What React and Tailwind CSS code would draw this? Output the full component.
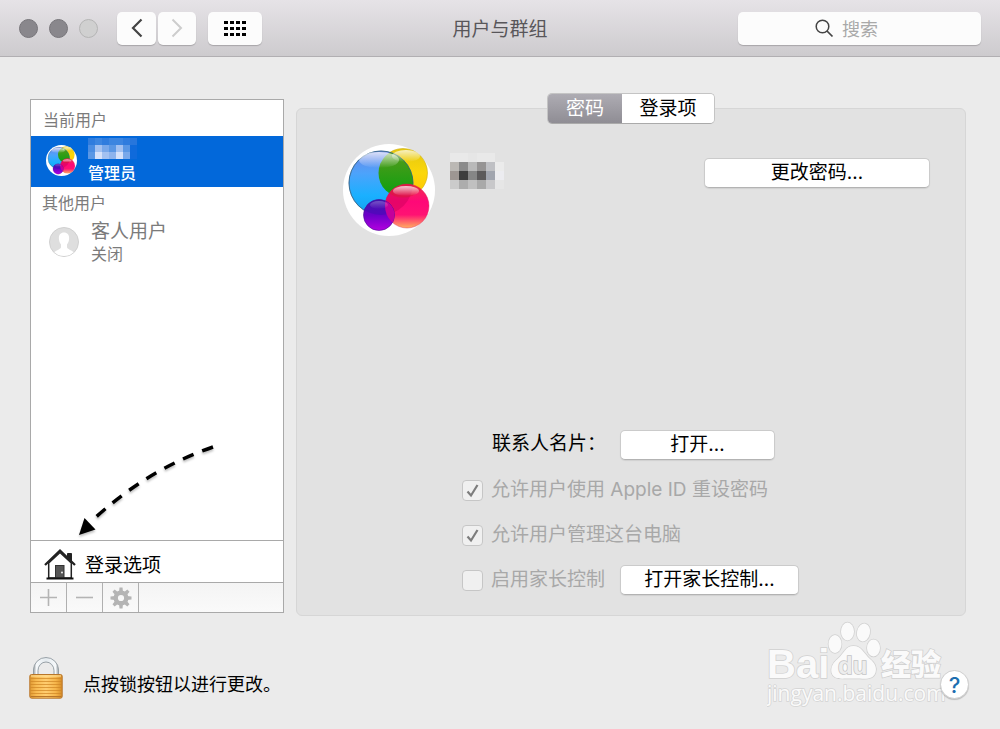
const PANEL_PIXELS = [
  ["#e9e9e9", "#e9e9e9", "#e6e6e6", "#e9e9e9", "#e9e9e9", "#e2e2e2"],
  ["#bbb8b4", "#8b8b8b", "#b9b9b9", "#969494", "#bfc0c4", "#ebebeb"],
  ["#9d9692", "#3e3e3e", "#868686", "#5c5a5b", "#a1a5af", "#ececf0"],
  ["#cbcbcb", "#adadad", "#c0c0c0", "#a9a9a9", "#c8c8ca", "#e6e6e6"],
];

const SIDEBAR_PIXELS = [
  ["#2f7cde", "#3c85e0", "#2f7cde", "#3c85e0", "#3c85e0", "#2f7cde", "#2776dc"],
  ["#4a8de3", "#a3c1f1", "#79a8ea", "#5a97e5", "#a3c1f1", "#5a97e5", "#0f6adb"],
  ["#5a97e5", "#d5e1fa", "#a3c1f1", "#8db3ed", "#d5e1fa", "#79a8ea", "#0f6adb"],
];

function Mosaic({ rows, cell, className }) {
  const w = rows[0].length * cell;
  const h = rows.length * cell;
  return (
    <svg width={w} height={h} viewBox={`0 0 ${w} ${h}`} shapeRendering="crispEdges" className={className} aria-hidden="true">
      {rows.map((row, y) =>
        row.map((fill, x) => <rect key={`${x}-${y}`} x={x * cell} y={y * cell} width={cell} height={cell} fill={fill} />)
      )}
    </svg>
  );
}

function Avatar({ id, className }) {
  return (
    <svg viewBox="0 0 92 92" className={className} aria-hidden="true">
      <defs>
        <linearGradient id={`${id}-blue`} x1="0" y1="0" x2="0" y2="1">
          <stop offset="0" stopColor="#6f86e6" />
          <stop offset=".35" stopColor="#4ca3fb" />
          <stop offset=".7" stopColor="#1ab0ff" />
          <stop offset="1" stopColor="#12a0ee" />
        </linearGradient>
        <linearGradient id={`${id}-yellow`} x1="0" y1="0" x2="0" y2="1">
          <stop offset="0" stopColor="#e3c712" />
          <stop offset=".5" stopColor="#fbd70a" />
          <stop offset="1" stopColor="#ffc400" />
        </linearGradient>
        <linearGradient id={`${id}-green`} x1="0" y1="0" x2="0" y2="1">
          <stop offset="0" stopColor="#5c9a1c" />
          <stop offset="1" stopColor="#08a010" />
        </linearGradient>
        <linearGradient id={`${id}-pink`} x1="0" y1="0" x2="0" y2="1">
          <stop offset="0" stopColor="#f0344c" />
          <stop offset=".4" stopColor="#ff0878" />
          <stop offset=".7" stopColor="#ff1273" />
          <stop offset="1" stopColor="#ffb060" />
        </linearGradient>
        <linearGradient id={`${id}-purple`} x1="0" y1="0" x2="0" y2="1">
          <stop offset="0" stopColor="#4a1bb0" />
          <stop offset=".5" stopColor="#6a00c8" />
          <stop offset="1" stopColor="#b400e0" />
        </linearGradient>
        <linearGradient id={`${id}-shine`} x1="0" y1="0" x2="0" y2="1">
          <stop offset="0" stopColor="#fff" stopOpacity=".75" />
          <stop offset="1" stopColor="#fff" stopOpacity="0" />
        </linearGradient>
        <clipPath id={`${id}-clip`}>
          <circle cx="38" cy="39" r="32" />
        </clipPath>
        <clipPath id={`${id}-clip-pink`}>
          <circle cx="64" cy="62" r="22" />
        </clipPath>
      </defs>
      <circle cx="46" cy="46" r="46" fill="#fff" />
      <circle cx="60" cy="29" r="24.500" fill={`url(#${id}-yellow)`} stroke="#cfae10" strokeWidth=".6" />
      <circle cx="38" cy="39" r="32" fill={`url(#${id}-blue)`} stroke="#3c63b8" strokeWidth=".8" />
      <g clipPath={`url(#${id}-clip)`}>
        <circle cx="60" cy="29" r="24.500" fill={`url(#${id}-green)`} />
      </g>
      <circle cx="38" cy="39" r="32" fill="none" stroke="#24654a" strokeOpacity=".5" strokeWidth=".8" />
      <circle cx="64" cy="62" r="22" fill={`url(#${id}-pink)`} stroke="#d81c50" strokeWidth=".4" />
      <g clipPath={`url(#${id}-clip-pink)`}>
        <circle cx="38" cy="39" r="32" fill="#d0005c" fillOpacity=".5" />
        <circle cx="60" cy="29" r="24.500" fill="#d8202c" fillOpacity=".4" />
      </g>
      <circle cx="36" cy="71" r="15.500" fill={`url(#${id}-purple)`} stroke="#4a1090" strokeWidth=".6" />
      <g clipPath={`url(#${id}-clip)`}>
        <circle cx="36" cy="71" r="15.500" fill="#3a10b0" fillOpacity=".45" />
      </g>
      <g clipPath={`url(#${id}-clip-pink)`}>
        <circle cx="36" cy="71" r="15.500" fill="#c4009c" />
      </g>
      <ellipse cx="36" cy="16" rx="20" ry="8" fill={`url(#${id}-shine)`} />
      <ellipse cx="63" cy="12" rx="14" ry="6" fill={`url(#${id}-shine)`} />
      <ellipse cx="63" cy="47" rx="13" ry="5" fill={`url(#${id}-shine)`} />
      <ellipse cx="36" cy="61" rx="9" ry="4" fill={`url(#${id}-shine)`} opacity=".35" />
    </svg>
  );
}

function GuestAvatar() {
  return (
    <svg viewBox="0 0 30 30" className="size-[30px]" aria-hidden="true">
      <circle cx="15" cy="15" r="14.500" fill="#dedede" stroke="#d0d0d0" />
      <path
        d="M15 5.500C11.500 5.500 9.700 8 9.900 11.500C10 14.200 10.800 16 12 17.500V20.300C11.800 22.300 7.500 23 5.300 25.200A14 14 0 0 0 24.700 25.200C22.500 23 18.200 22.300 18 20.300V17.500C19.200 16 20 14.200 20.100 11.500C20.300 8 18.500 5.500 15 5.500Z"
        fill="#fff"
      />
    </svg>
  );
}

function House() {
  return (
    <svg viewBox="0 0 32 32" className="size-8" aria-hidden="true">
      <path d="M23.500 5.500H27.500V13L23.500 9Z" fill="#222" stroke="#222" />
      <path d="M4.700 15L16 4.500L27.300 15V30H4.700Z" fill="#fff" stroke="#222" strokeWidth="1.500" />
      <path d="M1 17L16 2.500L31 17" fill="none" stroke="#222" strokeWidth="2.300" />
      <rect x="11.500" y="17.500" width="8.500" height="12.500" fill="#555" stroke="#333" />
      <circle cx="18" cy="24.500" r=".900" fill="#fff" />
      <path d="M2.500 30.500H29.500" stroke="#111" strokeWidth="2" />
    </svg>
  );
}

function Gear() {
  return (
    <svg viewBox="0 0 22 22" className="size-[22px]" aria-hidden="true">
      <g fill="#b4b4b4">
        {[0, 45, 90, 135, 180, 225, 270, 315].map((a) => (
          <path key={a} d="M9 5L9.500 .500H12.500L13 5Z" transform={`rotate(${a} 11 11)`} />
        ))}
      </g>
      <circle cx="11" cy="11" r="5.300" fill="none" stroke="#b4b4b4" strokeWidth="4.400" />
    </svg>
  );
}

function Lock() {
  return (
    <svg viewBox="0 0 34 42" className="h-[42px] w-[34px]" aria-hidden="true">
      <defs>
        <linearGradient id="lock-body" x1="0" y1="0" x2="1" y2="0">
          <stop offset="0" stopColor="#e09a34" />
          <stop offset=".2" stopColor="#f8bb52" />
          <stop offset=".5" stopColor="#ffcd70" />
          <stop offset=".8" stopColor="#f6b54a" />
          <stop offset="1" stopColor="#d68c28" />
        </linearGradient>
        <linearGradient id="lock-shackle" x1="0" y1="0" x2="1" y2="0">
          <stop offset="0" stopColor="#9aa0a4" />
          <stop offset=".12" stopColor="#f6f9fb" />
          <stop offset=".5" stopColor="#e4eaee" />
          <stop offset=".88" stopColor="#f6f9fb" />
          <stop offset="1" stopColor="#9aa0a4" />
        </linearGradient>
      </defs>
      <path d="M4.500 19V13A12.500 12.500 0 0 1 29.500 13V19H25V13.500A8 8.500 0 0 0 9 13.500V19Z" fill="url(#lock-shackle)" stroke="#8f999f" strokeWidth=".9" />
      <rect x=".800" y="17.500" width="32.400" height="23.700" rx="1.800" fill="url(#lock-body)" stroke="#b8762a" />
      <path d="M1.500 21.500H32.500M1.500 24.500H32.500M1.500 27.500H32.500M1.500 30.500H32.500M1.500 33.500H32.500M1.500 36.500H32.500" stroke="#cf8524" strokeOpacity=".7" />
      <path d="M2 19H32" stroke="#ffe3a0" />
      <path d="M1.500 39.500H32.500" stroke="#b8762a" />
    </svg>
  );
}

function PushButton({ children, className }) {
  return (
    <button
      type="button"
      className={`h-[30px] rounded-[5px] border border-[#cbcbcb] border-b-[#b3b3b3] bg-white text-[19px] leading-7 text-black shadow-[0_1px_1px_rgba(0,0,0,0.08)] ${className}`}
    >
      {children}
    </button>
  );
}

function CheckRow({ id, label, checked }) {
  return (
    <div className="flex h-[30px] items-center gap-2">
      <span className="grid size-[21px] shrink-0 place-items-center">
        <input
          id={id}
          type="checkbox"
          disabled
          defaultChecked={checked}
          className="peer col-start-1 row-start-1 size-[21px] appearance-none rounded-[4px] border border-[#c6c6c6] bg-[#f0f0f0]"
        />
        <svg viewBox="0 0 21 21" className="invisible col-start-1 row-start-1 size-[21px] peer-checked:visible" aria-hidden="true">
          <path d="M5.500 11.500L9 15.500L15.500 5" fill="none" stroke="#7d7d7d" strokeWidth="2.200" />
        </svg>
      </span>
      <label htmlFor={id} className="whitespace-nowrap text-[19px] leading-7 text-[#a8a8a8]">
        {label}
      </label>
    </div>
  );
}

function Toolbar() {
  return (
    <header className="grid h-[57px] grid-cols-[1fr_auto_1fr] items-center border-b border-[#b1afb2] bg-linear-to-b from-[#e6e3e7] to-[#cdcbce] px-[19px]">
      <div className="flex items-center">
        <div className="flex gap-[11px]">
          <button type="button" aria-label="关闭" className="size-[19px] rounded-full border border-[#77757a] bg-[#89878c]" />
          <button type="button" aria-label="最小化" className="size-[19px] rounded-full border border-[#77757a] bg-[#89878c]" />
          <button type="button" aria-label="缩放" className="size-[19px] rounded-full border border-[#b5b5b5] bg-[#d0d0d0]" />
        </div>
        <div className="ml-[19px] flex gap-0.5">
          <button type="button" aria-label="后退" className="grid h-[33px] w-[39px] place-items-center rounded-[5px] bg-[#fcfcfc] shadow-[0_1px_1px_rgba(0,0,0,0.2)]">
            <svg width="12" height="20" viewBox="0 0 12 20">
              <path d="M10.500 1.500L2 10L10.500 18.500" fill="none" stroke="#444" strokeWidth="2.200" />
            </svg>
          </button>
          <button type="button" aria-label="前进" className="grid h-[33px] w-[38px] place-items-center rounded-[5px] bg-[#fcfcfc] shadow-[0_1px_1px_rgba(0,0,0,0.2)]">
            <svg width="12" height="20" viewBox="0 0 12 20">
              <path d="M1.500 1.500L10 10L1.500 18.500" fill="none" stroke="#cdcdcd" strokeWidth="2" />
            </svg>
          </button>
        </div>
        <button type="button" aria-label="显示全部" className="ml-3 grid h-[33px] w-[54px] place-items-center rounded-[5px] bg-[#fcfcfc] shadow-[0_1px_1px_rgba(0,0,0,0.2)]">
          <svg width="22" height="15" viewBox="0 0 22 15" shapeRendering="crispEdges">
            {[0, 6, 12].map((y) => [0, 6, 12, 18].map((x) => <rect key={`${x}-${y}`} x={x} y={y} width="4" height="3" fill="#000" />))}
          </svg>
        </button>
      </div>
      <h1 className="pt-1 text-[19px] leading-7 text-[#58565a]">用户与群组</h1>
      <label className="flex h-[33px] w-[243px] items-center justify-center gap-2 justify-self-end rounded-[5px] bg-[#fcfcfc] shadow-[0_1px_1px_rgba(0,0,0,0.2)]">
        <svg width="19" height="19" viewBox="0 0 19 19" aria-hidden="true">
          <circle cx="7.500" cy="7.500" r="6.300" fill="none" stroke="#444" strokeWidth="1.500" />
          <path d="M12 12L17.500 17.500" stroke="#444" strokeWidth="1.700" />
        </svg>
        <input
          type="search"
          aria-label="搜索"
          placeholder="搜索"
          className="w-[62px] bg-transparent pt-1 text-[18px] leading-7 outline-none placeholder:text-[#a9a9a9]"
        />
      </label>
    </header>
  );
}

function Sidebar() {
  return (
    <aside className="relative flex w-[254px] shrink-0 flex-col border border-[#a9a9a9] bg-white">
      <div className="flex-1">
        <h2 className="px-3 pt-2 pb-1 text-[16px] leading-6 text-[#7b7b7b]">当前用户</h2>
        <button type="button" className="flex h-[51px] w-full gap-[11px] bg-[#0268da] pl-[15px] text-left">
          <Avatar id="small" className="mt-[9px] size-[31px]" />
          <span className="flex flex-col">
            <Mosaic rows={SIDEBAR_PIXELS} cell={7} className="mt-0.5" />
            <span className="pt-0.5 text-[16px] leading-6 font-medium text-white">管理员</span>
          </span>
        </button>
        <h2 className="px-[11px] pt-1 text-[16px] leading-6 text-[#7b7b7b]">其他用户</h2>
        <button type="button" className="flex w-full items-center gap-3 pt-[5px] pl-[18px] text-left text-[#7b7b7b]">
          <GuestAvatar />
          <span className="flex flex-col">
            <span className="text-[19px] leading-6">客人用户</span>
            <span className="text-[16px] leading-5">关闭</span>
          </span>
        </button>
      </div>
      <button type="button" className="flex h-[42px] items-end gap-[9px] border-t border-[#a9a9a9] pb-0.5 pl-[13px] text-left text-[19px] leading-7 text-black">
        <House />
        登录选项
      </button>
      <div className="flex h-[30px] border-t border-[#a9a9a9] bg-linear-to-b from-[#f4f4f4] to-[#fafafa]">
        <button type="button" aria-label="添加" className="grid w-9 place-items-center border-r border-[#b0b0b0]">
          <svg width="17" height="17" viewBox="0 0 17 17">
            <path d="M8.500 0V17M0 8.500H17" stroke="#b4b4b4" strokeWidth="1.600" />
          </svg>
        </button>
        <button type="button" aria-label="移除" className="grid w-9 place-items-center border-r border-[#b0b0b0]">
          <svg width="17" height="17" viewBox="0 0 17 17">
            <path d="M0 8.500H17" stroke="#b4b4b4" strokeWidth="1.600" />
          </svg>
        </button>
        <button type="button" aria-label="操作" className="grid w-9 place-items-center border-r border-[#b0b0b0]">
          <Gear />
        </button>
      </div>
      <svg viewBox="0 0 140 94" className="pointer-events-none absolute bottom-[75px] left-[46px] h-[94px] w-[140px] drop-shadow-[0_2px_1px_rgba(0,0,0,0.25)]" aria-hidden="true">
        <path d="M136 4Q72 26 19 74" fill="none" stroke="#000" strokeWidth="3.500" strokeDasharray="11.500 9.300" />
        <path d="M2 92L7.500 75L18.500 86.500Z" fill="#000" />
      </svg>
    </aside>
  );
}

function PasswordPanel() {
  return (
    <section className="mt-[9px] flex flex-1 flex-col rounded-[6px] border border-[#d6d6d6] bg-[#e2e2e2] pb-5">
      <div role="tablist" className="-mt-4 flex h-[31px] self-center overflow-hidden rounded-[5px] border border-[#c4c4c4] border-b-[#aaa] text-[19px] leading-7">
        <button type="button" role="tab" aria-selected="true" className="w-[74px] bg-linear-to-b from-[#aeacb3] to-[#8f8d94] text-white">
          密码
        </button>
        <button type="button" role="tab" aria-selected="false" className="w-[92px] bg-white text-black">
          登录项
        </button>
      </div>
      <div className="mt-5 flex items-start pr-[35px] pl-[46px]">
        <Avatar id="large" className="size-[92px]" />
        <Mosaic rows={PANEL_PIXELS} cell={9} className="mt-[9px] ml-[15px]" />
        <PushButton className="mt-[14px] ml-auto w-[226px]">更改密码…</PushButton>
      </div>
      <div className="mt-auto grid grid-cols-[158px_auto] justify-start gap-y-[15px] pl-[165px]">
        <span className="pl-[30px] text-[19px] leading-7 text-black">联系人名片：</span>
        <PushButton className="w-[155px]">打开…</PushButton>
        <div className="col-span-2">
          <CheckRow id="reset" label="允许用户使用 Apple ID 重设密码" checked />
        </div>
        <div className="col-span-2">
          <CheckRow id="admin" label="允许用户管理这台电脑" checked />
        </div>
        <CheckRow id="parental" label="启用家长控制" />
        <PushButton className="w-[179px]">打开家长控制…</PushButton>
      </div>
    </section>
  );
}

function Watermark() {
  return (
    <div className="pointer-events-none absolute right-[51px] bottom-[19px] w-[182px]" aria-hidden="true">
      <svg viewBox="0 0 182 90" className="h-[90px] w-full">
        <g fill="#fafafa" stroke="#d0d0d0" strokeWidth="1.500" paintOrder="stroke">
          <text x="0" y="58" fontFamily="Liberation Sans, sans-serif" fontWeight="700" fontSize="40">
            Bai
          </text>
          <ellipse cx="68" cy="24" rx="6.500" ry="9" />
          <ellipse cx="80.500" cy="11.500" rx="6.500" ry="9" />
          <ellipse cx="96.500" cy="12.500" rx="6.500" ry="9" transform="rotate(12 96.500 12.500)" />
          <ellipse cx="106.500" cy="28" rx="6.500" ry="8.500" />
          <path d="M86.500 26C95 26 97 34 103 39C108 43 110 48 108.500 52.500C106.500 59 100 59 93 58.500H79C72 59 66 58.500 64.500 52.500C63.500 47 66 43 70.500 39C77 34 78 26 86.500 26Z" />
          <text x="71" y="54" fontFamily="Liberation Sans, sans-serif" fontWeight="700" fontSize="24" fill="#ededed" stroke="#c4c4c4">
            du
          </text>
          <text x="114" y="55" fontFamily="Noto Sans CJK SC, sans-serif" fontWeight="900" fontSize="30">
            经验
          </text>
          <text x="0" y="81" fontFamily="Open Sans, sans-serif" fontSize="21" stroke="#d4d4d4">
            jingyan.baidu.com
          </text>
        </g>
      </svg>
    </div>
  );
}

export default function App() {
  return (
    <div className="relative flex min-h-screen flex-col bg-[#ebebeb] font-['Inter','Noto_Sans_CJK_SC',sans-serif]">
      <Toolbar />
      <main className="flex flex-1 gap-3 pt-[42px] pr-[34px] pl-[30px]">
        <Sidebar />
        <div className="mb-[-3px] flex flex-1 flex-col">
          <PasswordPanel />
        </div>
      </main>
      <footer className="flex h-[116px] items-end gap-5 pr-[31px] pb-[30px] pl-[29px]">
        <button type="button" aria-label="锁定">
          <Lock />
        </button>
        <p className="text-[18px] leading-7 text-black">点按锁按钮以进行更改。</p>
        <button
          type="button"
          aria-label="帮助"
          className="relative z-10 ml-auto grid size-[29px] place-items-center rounded-full border border-[#cfcfcf] bg-white text-[22px] leading-none font-medium text-[#1d6fb0] shadow-[0_1px_1px_rgba(0,0,0,0.2)]"
        >
          ?
        </button>
      </footer>
      <Watermark />
    </div>
  );
}
